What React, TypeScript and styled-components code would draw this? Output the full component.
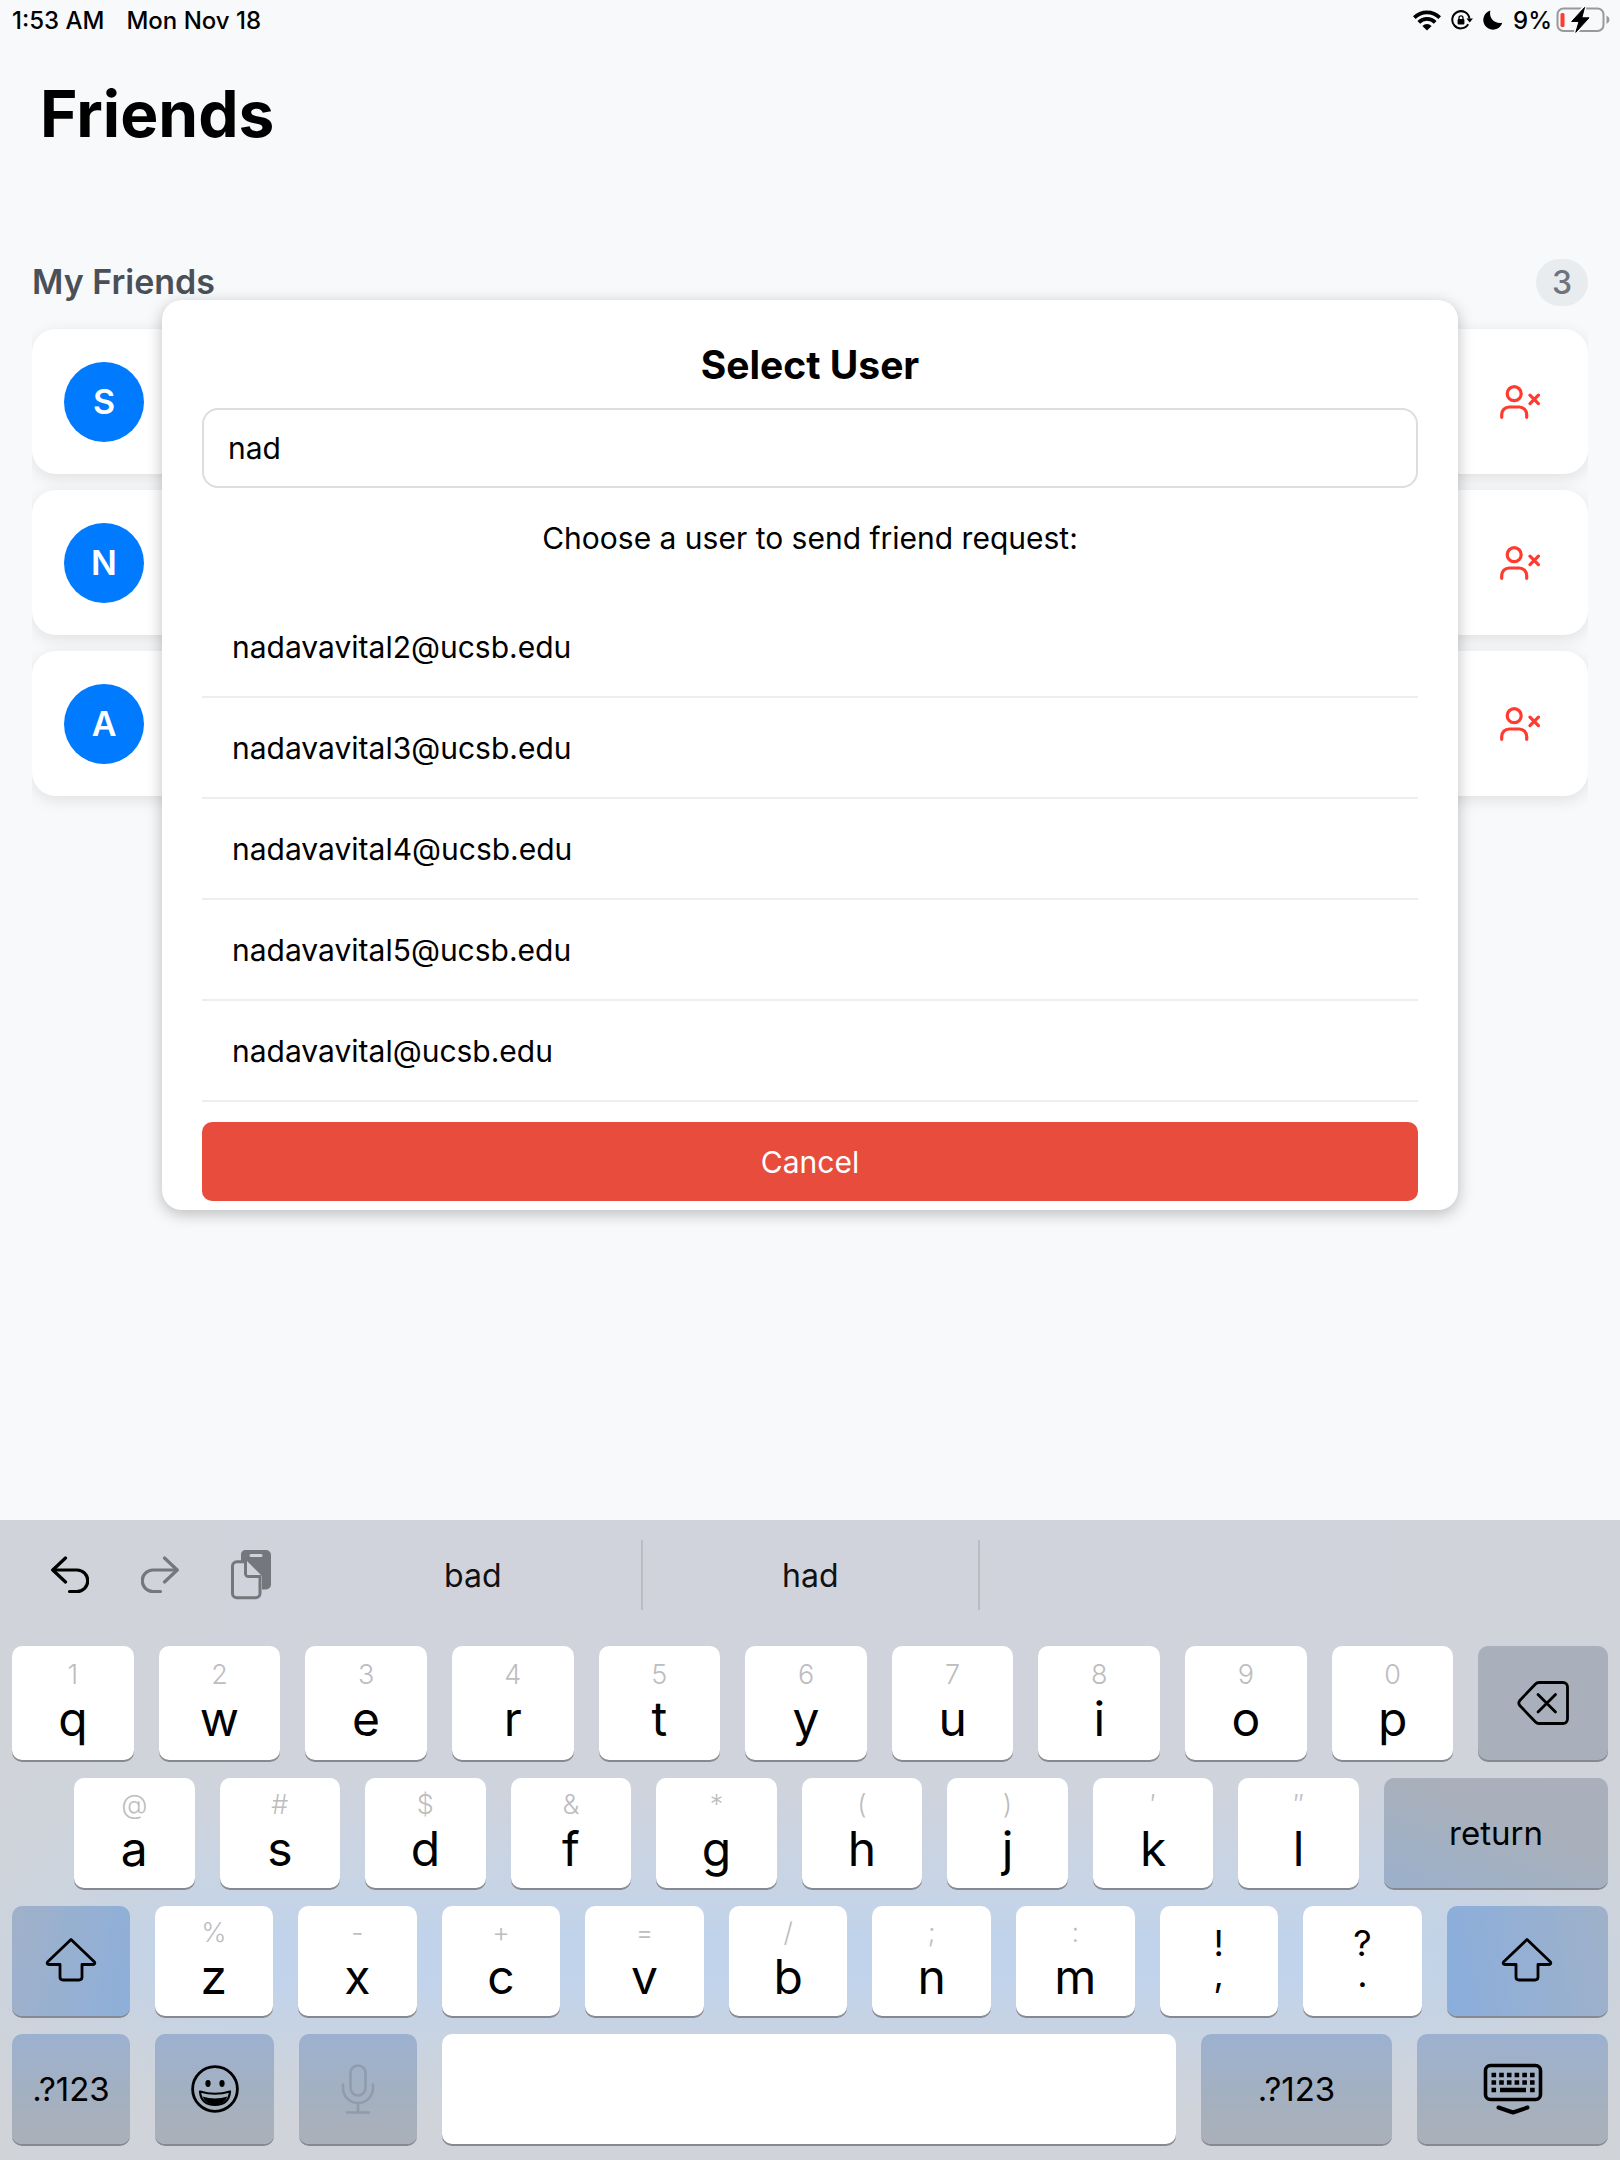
import React from "react";
import styled, { createGlobalStyle, css } from "styled-components";

const font = css`font-family: Inter, "Liberation Sans", Arial, sans-serif;`;

const GlobalStyle = createGlobalStyle`
  *, *::before, *::after { box-sizing: border-box; }
  body { margin: 0; background: #f8f9fb; ${font} color: #000; }
  button, input { font: inherit; color: inherit; margin: 0; }
  h1, h2, p, ul { margin: 0; padding: 0; }
`;

const Screen = styled.div`
  position: relative;
  display: flex;
  flex-direction: column;
  min-height: 100vh;
  background: #f8f9fb;
`;

const StatusBar = styled.header`
  display: flex;
  justify-content: space-between;
  align-items: center;
  height: 40px;
  padding: 0 10px 0 12px;
  font-size: 24px;
  font-weight: 500;
`;

const StatusGroup = styled.div<{ $gap: number }>`
  display: flex;
  align-items: center;
  gap: ${(p) => p.$gap}px;
`;

const Battery = styled.span`
  display: flex;
  align-items: center;
  gap: 4px;
`;

const Title = styled.h1`
  padding: 34px 40px 0;
  font-size: 64px;
  line-height: 80px;
  font-weight: 700;
`;

const Section = styled.section`
  flex: 1;
  padding: 104px 32px 0;
`;

const SectionHead = styled.div`
  display: flex;
  justify-content: space-between;
  align-items: center;
  height: 48px;
`;

const SectionTitle = styled.h2`
  font-size: 34px;
  line-height: 48px;
  font-weight: 600;
  color: #495057;
`;

const Count = styled.span`
  padding: 0 16px;
  border-radius: 24px;
  background: #e9ecef;
  color: #6c757d;
  font-size: 32px;
  line-height: 47px;
  font-weight: 500;
`;

const FriendList = styled.ul`
  display: flex;
  flex-direction: column;
  gap: 16px;
  padding: 23px 0 40px;
  list-style: none;
  overflow: hidden;
`;

const FriendCard = styled.li`
  display: flex;
  justify-content: space-between;
  align-items: center;
  height: 145px;
  padding: 0 48px 0 32px;
  border-radius: 24px;
  background: #fff;
  box-shadow: 0 4px 16px rgba(0, 0, 0, 0.1);
`;

const Avatar = styled.span`
  display: grid;
  place-items: center;
  width: 80px;
  height: 80px;
  border-radius: 50%;
  background: #007aff;
  color: #fff;
  font-size: 34px;
  font-weight: 600;
`;

const IconButton = styled.button<{ $color?: string }>`
  display: grid;
  place-items: center;
  padding: 0;
  border: 0;
  background: none;
  color: ${(p) => p.$color ?? "#000"};
`;

const Dialog = styled.div`
  position: absolute;
  top: 300px;
  left: 10%;
  right: 10%;
  padding: 40px 40px 9px;
  border-radius: 20px;
  background: #fff;
  box-shadow: 0 4px 16px rgba(0, 0, 0, 0.25);
  font-size: 30px;
`;

const DialogTitle = styled.h2`
  padding-bottom: 18px;
  text-align: center;
  font-size: 39px;
  line-height: 50px;
  font-weight: 700;
`;

const SearchField = styled.input`
  display: block;
  width: 100%;
  height: 80px;
  padding: 0 24px;
  border: 2px solid #ddd;
  border-radius: 16px;
  background: #fff;
  outline: 0;
`;

const Prompt = styled.p`
  padding: 30px 0 39px;
  text-align: center;
  line-height: 40px;
`;

const UserList = styled.ul`
  list-style: none;
`;

const UserButton = styled.button`
  display: block;
  width: 100%;
  height: 101px;
  padding: 0 30px;
  border: 0;
  border-bottom: 2px solid #eee;
  background: none;
  text-align: left;
`;

const CancelButton = styled.button`
  display: block;
  width: 100%;
  height: 79px;
  margin-top: 20px;
  border: 0;
  border-radius: 10px;
  background: #e74c3c;
  color: #fff;
`;

const Keyboard = styled.div`
  display: flex;
  flex-direction: column;
  gap: 16px;
  padding: 0 12px 14px;
  background:
    linear-gradient(to right, rgba(208, 211, 216, 0.75), rgba(208, 211, 216, 0) 14%, rgba(208, 211, 216, 0) 86%, rgba(208, 211, 216, 0.75)),
    linear-gradient(to bottom, #d0d3db 0, #d0d3db 38%, #c8d4e4 56%, #c0d3eb 66%, #c2d3ea 73%, #cbd3df 84%, #d0d3da 93%);
`;

const SuggestionBar = styled.div`
  display: flex;
  align-items: center;
  height: 110px;
`;

const EditTools = styled.div`
  display: flex;
  align-items: center;
  gap: 52px;
  width: 293px;
  padding-left: 39px;
`;

const Suggestion = styled.button`
  flex: 1;
  height: 70px;
  padding: 0;
  border: 0;
  border-right: 2px solid #b9bcc1;
  background: none;
  color: #111;
  font-size: 32px;
  &:last-child { flex: 0 1 628px; border-right: 0; }
`;

const KeyRow = styled.div<{ $indent?: number }>`
  display: flex;
  gap: 25px;
  padding-left: ${(p) => p.$indent ?? 0}px;
`;

const tints = {
  plain: "#fff",
  grey: "#a9b0bc",
  fadeDown: "linear-gradient(200deg, #a9b0bb 40%, #9bb0cc)",
  shiftLeft: "linear-gradient(100deg, #a0b1c9, #8dafda)",
  shiftRight: "linear-gradient(80deg, #8aaedd, #9fb1c9)",
  fadeUp: "linear-gradient(#9cb1d0, #a3b0c2 50%, #a9b0ba 90%)",
};

const Key = styled.button<{ $size: number; $tall?: boolean; $tint?: keyof typeof tints; $muted?: boolean }>`
  flex: ${(p) => p.$size} 1 0;
  min-width: 0;
  display: flex;
  flex-direction: column;
  align-items: center;
  justify-content: center;
  height: ${(p) => (p.$tall ? 114 : 110)}px;
  margin-bottom: 2px;
  padding: 0;
  border: 0;
  border-radius: 10px;
  background: ${(p) => tints[p.$tint ?? "plain"]};
  box-shadow: 0 2px 0 #868a90;
  color: ${(p) => (p.$muted ? "#909cae" : "#000")};
  font-size: 33px;
`;

const Alternate = styled.span`
  color: #bdbdbf;
  font-size: 27px;
  line-height: 36px;
  font-weight: 300;
`;

const Letter = styled.span`
  padding-bottom: 4px;
  font-size: 48px;
  line-height: 52px;
  font-weight: 400;
`;

const Punctuation = styled.span`
  padding-bottom: 4px;
  font-size: 36px;
  line-height: 31px;
  white-space: pre;
`;

const WifiIcon = () => (
  <svg width="28" height="21" viewBox="0 0 28 21" fill="none" stroke="#000" strokeWidth="3.8">
    <path d="M1.300 7.600A18 18 0 0 1 26.700 7.600" />
    <path d="M5.800 12.300A11.600 11.600 0 0 1 22.200 12.300" />
    <path d="M9.400 16A6.500 6.500 0 0 1 18.600 16L14 20.600Z" fill="#000" stroke="none" />
  </svg>
);

const RotationLockIcon = () => (
  <svg width="22" height="20" viewBox="0 0 22 20" fill="none" stroke="#000" strokeWidth="2">
    <path d="M17.200 14.300A8.600 8.600 0 1 1 18.400 8.600" />
    <path d="M15.400 8.400H22L18.700 12.600Z" fill="#000" stroke="none" />
    <rect x="6.600" y="9" width="6.800" height="5.400" rx="1" fill="#000" stroke="none" />
    <path d="M8 9.400V7.800a2 2 0 0 1 4 0v1.600" strokeWidth="1.300" />
  </svg>
);

const MoonIcon = () => (
  <svg width="20" height="20" viewBox="0 0 20 20">
    <path d="M7.400.6C5.600 7.600 10.800 14.300 19.300 12.700A9.700 9.700 0 1 1 7.400.6Z" fill="#000" />
  </svg>
);

const BatteryIcon = () => (
  <svg width="54" height="26" viewBox="0 0 54 26">
    <rect x="1.500" y="1.500" width="46" height="22.500" rx="6" fill="none" stroke="#98999b" strokeWidth="2" />
    <path d="M50.500 8.500q3 1.500 3 4.200t-3 4.200Z" fill="#98999b" />
    <rect x="4.500" y="6" width="4" height="14" rx="1.500" fill="#ff3b30" />
    <path d="M28.500.5 15.700 14.500H23L19.800 25.300 33 10.800H25.800Z" fill="#f8f9fb" stroke="#f8f9fb" strokeWidth="4" />
    <path d="M28.500.5 15.700 14.500H23L19.800 25.300 33 10.800H25.800Z" fill="#000" stroke="#000" strokeWidth="1" strokeLinejoin="round" />
  </svg>
);

const RemoveFriendIcon = () => (
  <svg width="40" height="34" viewBox="0 0 40 34" fill="none" stroke="#ff3b30" strokeWidth="3.200" strokeLinecap="round">
    <circle cx="14.200" cy="8.700" r="7" />
    <path d="M1.700 32.300V29.500a7.500 7.500 0 0 1 7.500-7.500h10a7.500 7.500 0 0 1 7.500 7.500v2.800" />
    <path d="M30 10.200l8.400 8.400M38.400 10.200 30 18.600" />
  </svg>
);

const UndoIcon = () => (
  <svg width="38" height="38" viewBox="0 0 38 38" fill="none" stroke="currentColor" strokeWidth="3.200" strokeLinecap="round" strokeLinejoin="round">
    <path d="M14.500 2 1.800 14 14.500 26" />
    <path d="M2 14H26A10.500 10.500 0 0 1 26 35.500H18.500" />
  </svg>
);

const RedoIcon = () => (
  <svg width="38" height="38" viewBox="0 0 38 38" fill="none" stroke="currentColor" strokeWidth="3.200" strokeLinecap="round" strokeLinejoin="round">
    <path d="M23.500 2 36.200 14 23.500 26" />
    <path d="M36 14H12A10.500 10.500 0 0 0 12 35.500H19.500" />
  </svg>
);

const PasteIcon = () => (
  <svg width="42" height="50" viewBox="0 0 42 50" fill="none">
    <path d="M14.500 0H35a5 5 0 0 1 5 5V34.500a5 5 0 0 1-5 5H31V26L16 11H10V4.500A4.500 4.500 0 0 1 14.500 0Z" fill="currentColor" />
    <rect x="18.500" y="4" width="13" height="3" rx="1.500" fill="#d0d3db" />
    <path d="M14.500 11.800H5.800A4.300 4.300 0 0 0 1.500 16V43.500A4.300 4.300 0 0 0 5.800 47.800H24.700A4.300 4.300 0 0 0 29 43.500V26.500H17.500A3 3 0 0 1 14.500 23.500Z" stroke="currentColor" strokeWidth="3" />
    <path d="M16 14V23.500a1.500 1.500 0 0 0 1.500 1.500H27Z" fill="#d0d3db" />
  </svg>
);

const BackspaceIcon = () => (
  <svg width="52" height="44" viewBox="0 0 52 44" fill="none" stroke="#000" strokeWidth="2.800" strokeLinecap="round" strokeLinejoin="round">
    <path d="M22 1.500H46A4.500 4.500 0 0 1 50.500 6V38A4.500 4.500 0 0 1 46 42.500H22A5 5 0 0 1 18.500 41L2.800 24.500A4 4 0 0 1 2.800 19.500L18.500 3A5 5 0 0 1 22 1.500Z" />
    <path d="M21 13.500 38.500 31M38.500 13.500 21 31" />
  </svg>
);

const ShiftIcon = () => (
  <svg width="52" height="46" viewBox="0 0 52 46" fill="none" stroke="#000" strokeWidth="2.800" strokeLinejoin="round">
    <path d="M26 1.500 2.500 24Q1.500 26.500 4 26.500H15V39Q15 42 18 42H34Q37 42 37 39V26.500H48Q50.500 26.500 49.500 24Z" />
  </svg>
);

const EmojiIcon = () => (
  <svg width="48" height="48" viewBox="0 0 48 48" fill="none" stroke="#000" strokeWidth="2.800">
    <circle cx="24" cy="24" r="22.400" />
    <ellipse cx="17" cy="18.500" rx="2.600" ry="3.400" fill="#000" stroke="none" />
    <ellipse cx="31" cy="18.500" rx="2.600" ry="3.400" fill="#000" stroke="none" />
    <path d="M9 26.500Q24 31 39 26.500Q38 40 24 40T9 26.500Z" strokeWidth="2.200" strokeLinejoin="round" />
    <path d="M11.500 31.500Q24 35.500 36.500 31.500Q33.500 39.500 24 39.500T11.500 31.500Z" fill="#000" stroke="none" />
  </svg>
);

const MicIcon = () => (
  <svg width="34" height="50" viewBox="0 0 34 50" fill="none" stroke="currentColor" strokeWidth="2.600" strokeLinecap="round">
    <rect x="9.500" y="1.500" width="15" height="30" rx="7.500" />
    <path d="M2 20.500V24a15 15 0 0 0 30 0V20.500M17 39v9M6 48.500H28" />
  </svg>
);

const HideKeyboardIcon = () => (
  <svg width="60" height="52" viewBox="0 0 60 52" fill="none" stroke="#000">
    <rect x="2.500" y="2.500" width="55" height="34" rx="5" strokeWidth="3.600" />
    <path d="M8.500 12H52M8.500 19.500H52" strokeWidth="4.600" strokeDasharray="4.600 3.100" />
    <path d="M8.500 27H13.100M47.100 27H51.700M17 27H43" strokeWidth="4.600" />
    <path d="M15.500 44.500 30 49.500 44.500 44.500" strokeWidth="4" strokeLinecap="round" strokeLinejoin="round" />
  </svg>
);

const friends = ["S", "N", "A"];
const users = ["nadavavital2", "nadavavital3", "nadavavital4", "nadavavital5", "nadavavital"];
const topRow = ["1q", "2w", "3e", "4r", "5t", "6y", "7u", "8i", "9o", "0p"];
const homeRow = ["@a", "#s", "$d", "&f", "*g", "(h", ")j", "′k", "″l"];
const lowerRow = ["%z", "-x", "+c", "=v", "/b", ";n", ":m"];

function LetterKey({ pair, size, tall }: { pair: string; size: number; tall?: boolean }) {
  return (
    <Key type="button" $size={size} $tall={tall}>
      <Alternate>{pair[0]}</Alternate>
      <Letter>{pair[1]}</Letter>
    </Key>
  );
}

export default function App() {
  return (
    <Screen>
      <GlobalStyle />
      <StatusBar>
        <StatusGroup $gap={22}>
          <span>1:53 AM</span>
          <span>Mon Nov 18</span>
        </StatusGroup>
        <StatusGroup $gap={10}>
          <WifiIcon />
          <RotationLockIcon />
          <MoonIcon />
          <Battery>
            9%
            <BatteryIcon />
          </Battery>
        </StatusGroup>
      </StatusBar>
      <Title>Friends</Title>
      <Section>
        <SectionHead>
          <SectionTitle>My Friends</SectionTitle>
          <Count>3</Count>
        </SectionHead>
        <FriendList>
          {friends.map((initial) => (
            <FriendCard key={initial}>
              <Avatar>{initial}</Avatar>
              <IconButton type="button" aria-label={"Remove " + initial}>
                <RemoveFriendIcon />
              </IconButton>
            </FriendCard>
          ))}
        </FriendList>
      </Section>

      <Dialog role="dialog" aria-labelledby="dialog-title">
        <DialogTitle id="dialog-title">Select User</DialogTitle>
        <SearchField type="text" aria-label="Search users" defaultValue="nad" />
        <Prompt>Choose a user to send friend request:</Prompt>
        <UserList>
          {users.map((user) => (
            <li key={user}>
              <UserButton type="button">{user}@ucsb.edu</UserButton>
            </li>
          ))}
        </UserList>
        <CancelButton type="button">Cancel</CancelButton>
      </Dialog>

      <Keyboard>
        <SuggestionBar>
          <EditTools>
            <IconButton type="button" aria-label="Undo"><UndoIcon /></IconButton>
            <IconButton type="button" aria-label="Redo" $color="#74777b"><RedoIcon /></IconButton>
            <IconButton type="button" aria-label="Paste" $color="#74777b"><PasteIcon /></IconButton>
          </EditTools>
          <Suggestion type="button">bad</Suggestion>
          <Suggestion type="button">had</Suggestion>
          <Suggestion type="button" aria-label="No suggestion" />
        </SuggestionBar>
        <KeyRow>
          {topRow.map((pair) => <LetterKey key={pair} pair={pair} size={122} tall />)}
          <Key type="button" $size={130} $tall $tint="grey" aria-label="Delete"><BackspaceIcon /></Key>
        </KeyRow>
        <KeyRow $indent={62}>
          {homeRow.map((pair) => <LetterKey key={pair} pair={pair} size={121} />)}
          <Key type="button" $size={225} $tint="fadeDown">return</Key>
        </KeyRow>
        <KeyRow>
          <Key type="button" $size={118} $tint="shiftLeft" aria-label="Shift"><ShiftIcon /></Key>
          {lowerRow.map((pair) => <LetterKey key={pair} pair={pair} size={119} />)}
          <Key type="button" $size={119}><Punctuation>{"!\n,"}</Punctuation></Key>
          <Key type="button" $size={119}><Punctuation>{"?\n."}</Punctuation></Key>
          <Key type="button" $size={162} $tint="shiftRight" aria-label="Shift"><ShiftIcon /></Key>
        </KeyRow>
        <KeyRow>
          <Key type="button" $size={118} $tint="fadeUp">.?123</Key>
          <Key type="button" $size={119} $tint="fadeUp" aria-label="Emoji"><EmojiIcon /></Key>
          <Key type="button" $size={118} $tint="fadeUp" $muted aria-label="Dictate"><MicIcon /></Key>
          <Key type="button" $size={734} aria-label="Space" />
          <Key type="button" $size={191} $tint="fadeUp">.?123</Key>
          <Key type="button" $size={191} $tint="fadeUp" aria-label="Hide keyboard"><HideKeyboardIcon /></Key>
        </KeyRow>
      </Keyboard>
    </Screen>
  );
}
